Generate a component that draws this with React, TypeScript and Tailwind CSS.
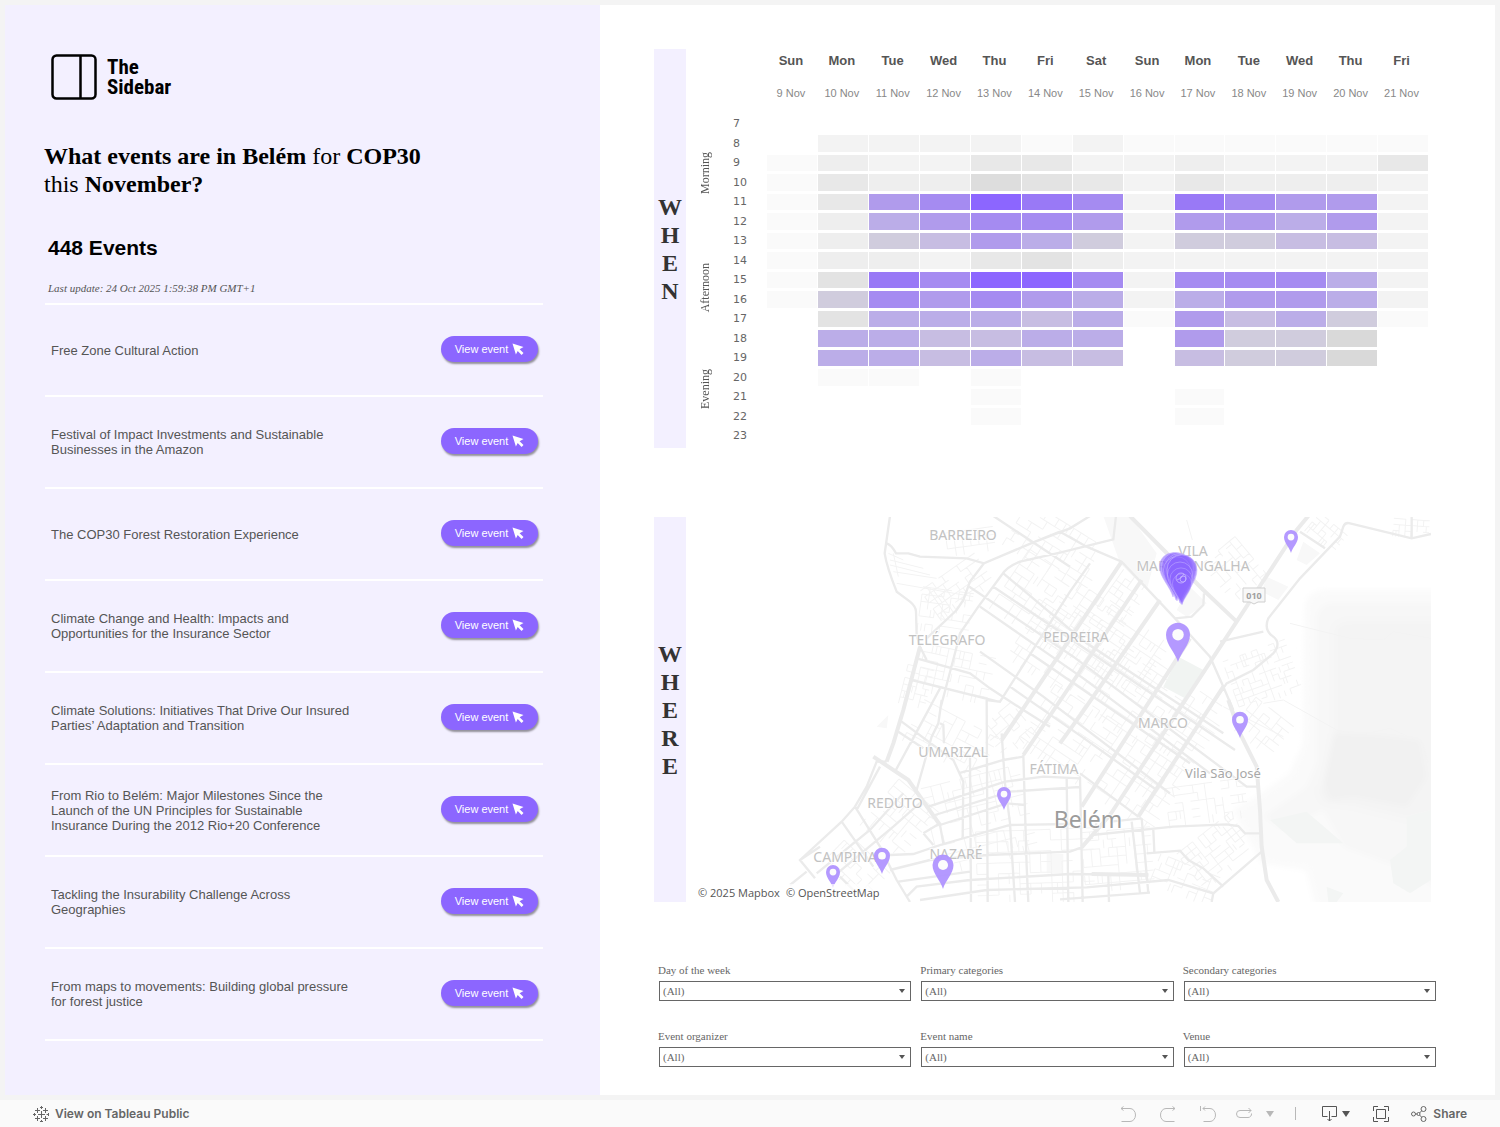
import type { ReactNode } from 'react';
import clsx from 'clsx';

const SANS = "font-['Liberation_Sans',sans-serif]";
const SERIF = "font-['Liberation_Serif',serif]";

const events = [
  'Free Zone Cultural Action',
  'Festival of Impact Investments and Sustainable Businesses in the Amazon',
  'The COP30 Forest Restoration Experience',
  'Climate Change and Health: Impacts and Opportunities for the Insurance Sector',
  'Climate Solutions: Initiatives That Drive Our Insured Parties’ Adaptation and Transition',
  'From Rio to Belém: Major Milestones Since the Launch of the UN Principles for Sustainable Insurance During the 2012 Rio+20 Conference',
  'Tackling the Insurability Challenge Across Geographies',
  'From maps to movements: Building global pressure for forest justice',
];

const days = [
  ['Sun', '9 Nov'],
  ['Mon', '10 Nov'],
  ['Tue', '11 Nov'],
  ['Wed', '12 Nov'],
  ['Thu', '13 Nov'],
  ['Fri', '14 Nov'],
  ['Sat', '15 Nov'],
  ['Sun', '16 Nov'],
  ['Mon', '17 Nov'],
  ['Tue', '18 Nov'],
  ['Wed', '19 Nov'],
  ['Thu', '20 Nov'],
  ['Fri', '21 Nov'],
];

// one character per day, "." is no events, "e" is the busiest
const hours: { hour: number; levels: string }[] = [
  { hour: 7, levels: '.............' },
  { hour: 8, levels: '.222212111111' },
  { hour: 9, levels: '1322442232224' },
  { hour: 10, levels: '1433654243332' },
  { hour: 11, levels: '14bcedc2dcbb2' },
  { hour: 12, levels: '13abccb2bbab2' },
  { hour: 13, levels: '1389ba8288992' },
  { hour: 14, levels: '1332453222222' },
  { hour: 15, levels: '15dceec2ccca2' },
  { hour: 16, levels: '18cbcba2abba2' },
  { hour: 17, levels: '.5aaa9a1b9a81' },
  { hour: 18, levels: '.aa99aa.b887.' },
  { hour: 19, levels: '.aa9a99.9887.' },
  { hour: 20, levels: '.11.1........' },
  { hour: 21, levels: '....1...1....' },
  { hour: 22, levels: '....1...1....' },
  { hour: 23, levels: '.............' },
];

const levelColors: Record<string, string> = {
  '.': 'bg-white',
  '1': 'bg-[#fafafa]',
  '2': 'bg-[#f3f3f3]',
  '3': 'bg-[#eeeeee]',
  '4': 'bg-[#e8e8e8]',
  '5': 'bg-[#e3e3e3]',
  '6': 'bg-[#dddddd]',
  '7': 'bg-[#d9d9d9]',
  '8': 'bg-[#d0ccdd]',
  '9': 'bg-[#c7bde2]',
  a: 'bg-[#bbade8]',
  b: 'bg-[#b09bec]',
  c: 'bg-[#a58bf1]',
  d: 'bg-[#9979f6]',
  e: 'bg-[#8c66ff]',
};

const periods: Record<number, { name: string; span: number; pad: string }> = {
  7: { name: 'Morning', span: 6, pad: 'pt-2' },
  13: { name: 'Afternoon', span: 6, pad: 'pt-1' },
  19: { name: 'Evening', span: 5, pad: 'pb-2' },
};

const filters = [
  'Day of the week',
  'Primary categories',
  'Secondary categories',
  'Event organizer',
  'Event name',
  'Venue',
];

function Strip({ text }: { text: string }) {
  return (
    <h2
      aria-label={text}
      className={clsx(
        SERIF,
        'flex w-8 shrink-0 flex-col items-center justify-center bg-[#f3f0ff] text-2xl leading-7 font-bold text-[#333333]'
      )}
    >
      {text.split('').map((letter, i) => (
        <span key={i}>{letter}</span>
      ))}
    </h2>
  );
}

function Logo() {
  return (
    <div className="ml-[6px] flex items-center gap-[10px]">
      <svg
        width="46"
        height="46"
        viewBox="0 0 46 46"
        fill="none"
        stroke="#000"
        strokeWidth="2.5"
        aria-hidden="true"
      >
        <rect x="1.5" y="1.5" width="43" height="43" rx="4" />
        <path d="M29.5 2v42" />
      </svg>
      <p className="font-['Roboto_Condensed',Roboto,sans-serif] text-[21px] leading-5 font-bold text-black">
        The
        <br />
        Sidebar
      </p>
    </div>
  );
}

function EventRow({ name }: { name: string }) {
  return (
    <li className="flex h-[92px] items-center justify-between border-b-2 border-white pr-[5px] pl-[6px]">
      <p className="w-[310px] text-[13px] leading-[15px] text-[#555555]">
        {name}
      </p>
      <button
        type="button"
        className="mb-[3px] flex h-[26px] w-[97px] items-center justify-center gap-1 rounded-full bg-[#8c66ff] pt-px text-[11px] text-white shadow-[1px_2px_2px_rgba(0,0,0,0.4)]"
      >
        View event
        <svg width="12" height="12" viewBox="0 0 12 12" aria-hidden="true">
          <path
            d="M.5.5l11 3.6-3.9 2.2 3.900 3.700-1.900 1.900-3.900-3.800L3.900 11.500z"
            fill="#fff"
          />
        </svg>
      </button>
    </li>
  );
}

function Heatmap() {
  return (
    <div className={clsx(SANS, 'min-w-0 flex-1')}>
      <table className="h-[398px] w-full table-fixed border-collapse">
        <colgroup>
          <col className="w-[38px]" />
          <col className="w-[43px]" />
          {days.map(([, date]) => (
            <col key={date} />
          ))}
        </colgroup>
        <thead>
          <tr className="h-[23px] text-[13px] leading-4 font-bold text-[#555555]">
            <td colSpan={2} />
            {days.map(([day, date]) => (
              <th key={date} scope="col" className="p-0 pr-[3px]">
                {day}
              </th>
            ))}
          </tr>
          <tr className="h-[42px] text-[11px] leading-4 text-[#888888]">
            <td colSpan={2} />
            {days.map(([, date]) => (
              <td
                key={date}
                className="p-0 pt-px pr-[3px] text-center whitespace-nowrap"
              >
                {date}
              </td>
            ))}
          </tr>
        </thead>
        <tbody>
          {hours.map(({ hour, levels }) => (
            <tr key={hour}>
              {periods[hour] && (
                <th
                  scope="rowgroup"
                  rowSpan={periods[hour].span}
                  className={clsx('p-0 font-normal', periods[hour].pad)}
                >
                  <span
                    className={clsx(
                      SERIF,
                      'inline-block rotate-180 text-xs leading-4 text-[#555555] [writing-mode:vertical-rl]'
                    )}
                  >
                    {periods[hour].name}
                  </span>
                </th>
              )}
              <th
                scope="row"
                className="p-0 pt-px pl-[9px] text-left font-['DejaVu_Sans',sans-serif] text-[11px] leading-4 font-normal text-[#666666]"
              >
                {hour}
              </th>
              {levels.split('').map((level, i) => (
                <td
                  key={i}
                  className={clsx(
                    'border-y-[3px] border-r border-white p-0',
                    levelColors[level]
                  )}
                />
              ))}
            </tr>
          ))}
        </tbody>
      </table>
    </div>
  );
}

const avenues = [
  'M1855 18L1820 60 1640 335 1260 915 1175 1012',
  'M1600 530L1345 920',
  'M1500 385L1175 890',
  'M1410 270L1175 610 1110 700',
  'M1355 210L1000 735',
  'M1295 155L1000 595 935 690',
  'M1320 18L1540 240 1640 335',
  'M690 410L640 600 610 700 590 755',
  'M550 740L655 810 750 945',
  'M1615 570L1650 670 1700 770 1710 900 1715 1010 1730 1110 1765 1176',
  'M1205 1092L1375 1095',
];

const roads = [
  'M600 18L584 130Q590 170 620 245L660 275Q678 290 678 305L680 375 690 410 710 450',
  'M590 100Q605 105 618 130L655 130 690 140 830 145 882 160 1030 97 1140 55 1200 18',
  'M882 160L840 215 820 270 800 300 710 385',
  'M1278 18L1270 88 1110 128 990 155Q950 170 935 195L865 290 810 370 800 410 750 600',
  'M910 18L1140 170',
  'M1110 65L1190 110 1295 155 1455 325 1560 440 1600 530 1630 600',
  'M1110 65L1030 97',
  'M1455 325L1505 320 1540 285 1542 250',
  'M1200 160L1140 245 930 575 890 570',
  'M940 190L1190 400 1600 670',
  'M910 230L1635 720',
  'M838 230L1150 440 1670 830 1705 830',
  'M870 290L1180 505 1560 790',
  'M870 425L1060 560 1440 850',
  'M1020 430L1500 760',
  'M960 530L1175 680 1400 840',
  'M1170 790L1345 920',
  'M680 445L840 490 900 535 1000 600 1080 650',
  'M665 510L925 575',
  'M750 535L715 600 615 785',
  'M755 570L745 640 725 680 680 840',
  'M750 640L760 645 762 700',
  'M890 570L893 1176',
  'M840 740L843 1176',
  'M635 635L790 750 820 815 818 985',
  'M625 665L700 715',
  'M750 945L760 1000',
  'M1000 735L1010 1070 1015 1176',
  'M935 670L945 820 960 940 975 1176',
  'M805 790L940 750 1000 740',
  'M715 890L945 815 1060 800 1170 805',
  'M735 915L960 845 1140 833 1170 831',
  'M750 945L950 880 1005 885',
  'M700 970L750 940M700 970L730 1005',
  'M600 1035L670 1032 750 1005 960 945 1140 942',
  'M600 1080L720 1050 890 1035 1140 1025 1175 1012',
  'M625 1115L840 1085',
  'M650 1160L680 1130 840 1110 1140 1092 1375 1095',
  'M690 1170L890 1140 1190 1132 1435 1110 1570 1150 1715 1025',
  'M1110 1168L1380 1148',
  'M590 755L560 755 530 830 495 890 455 935 330 1050 375 1105',
  'M570 770L500 900',
  'M495 890L570 1010 620 1110 660 1176',
  'M455 935L550 1070',
  'M380 1090L540 960 640 850',
  'M430 1100L610 950 700 870',
  'M330 1050L390 1010',
  'M300 1125L350 1085',
  'M450 1100L500 1150',
  'M1130 805L1135 1176',
  'M1170 800L1178 1176',
  'M1205 975L1450 950 1610 943 1645 948 1665 970 1715 970',
  'M1325 935L1350 1150',
  'M1355 925L1375 1150',
  'M1390 960L1393 1025',
  'M1370 1030L1470 1022 1495 1050 1540 1075 1600 1130',
  'M1260 935L1355 925',
  'M1210 960L1220 940',
  'M1255 1095L1257 1176',
  'M1590 395L1720 365',
  'M1830 65L1905 115',
  'M2223 72L2165 85 1980 40Q1965 36 1960 50L1950 80 1830 205 1735 325Q1720 360 1750 380 1775 400 1750 430L1690 480 1610 520 1555 600',
  'M2165 18L2165 85',
  'M1570 1150L1565 1176',
];

// blocks of side streets: origin, size, rotation and spacing
const districts = [
  { x: 960, y: 30, w: 260, h: 150, angle: 32, step: 26 },
  { x: 770, y: 60, w: 130, h: 70, angle: -8, step: 24 },
  { x: 700, y: 180, w: 190, h: 90, angle: -35, step: 22 },
  { x: 690, y: 240, w: 150, h: 120, angle: 8, step: 22 },
  { x: 690, y: 420, w: 200, h: 140, angle: 12, step: 24 },
  { x: 640, y: 470, w: 70, h: 110, angle: 14, step: 20 },
  { x: 920, y: 240, w: 500, h: 200, angle: 34, step: 27 },
  { x: 960, y: 400, w: 640, h: 240, angle: 34, step: 27 },
  { x: 1000, y: 640, w: 480, h: 200, angle: 34, step: 27 },
  { x: 1230, y: 220, w: 130, h: 90, angle: -55, step: 20 },
  { x: 660, y: 620, w: 250, h: 120, angle: 28, step: 28 },
  { x: 560, y: 830, w: 130, h: 160, angle: 40, step: 26 },
  { x: 420, y: 1010, w: 150, h: 110, angle: 44, step: 24 },
  { x: 720, y: 800, w: 270, h: 260, angle: -14, step: 30 },
  { x: 900, y: 600, w: 110, h: 110, angle: 50, step: 24 },
  { x: 860, y: 960, w: 320, h: 200, angle: -2, step: 32 },
  { x: 1180, y: 960, w: 190, h: 180, angle: -5, step: 26 },
  { x: 1390, y: 1060, w: 170, h: 90, angle: 22, step: 24 },
  { x: 1480, y: 960, w: 190, h: 130, angle: -38, step: 20 },
  { x: 1430, y: 820, w: 230, h: 110, angle: -8, step: 24 },
  { x: 1620, y: 420, w: 180, h: 160, angle: -20, step: 18 },
  { x: 1560, y: 110, w: 140, h: 130, angle: 50, step: 22 },
  { x: 1650, y: 590, w: 130, h: 110, angle: 38, step: 24 },
  { x: 1860, y: 30, w: 90, h: 60, angle: 40, step: 18 },
  { x: 2110, y: 28, w: 90, h: 45, angle: 4, step: 18 },
];

function noise(n: number) {
  const v = Math.sin(n * 12.9898) * 43758.5453;
  return v - Math.floor(v);
}

function sideStreets(w: number, h: number, step: number) {
  let d = '';
  for (let x = 0; x <= w; x += step) {
    for (let y = 0; y <= h; y += step) {
      const n = x * 7 + y * 13 + w;
      if (noise(n) > 0.35) d += `M${x} ${y}h${step}`;
      if (noise(n + 1) > 0.5) d += `M${x} ${y}v${step}`;
      if (noise(n + 2) > 0.9) d += `M${x + step / 2} ${y}v${step}`;
    }
  }
  return d;
}

const places = [
  { lines: ['BARREIRO'], x: 266, y: 23 },
  { lines: ['VILA', 'MARACANGALHA'], x: 496, y: 39 },
  { lines: ['TELÉGRAFO'], x: 250, y: 128 },
  { lines: ['PEDREIRA'], x: 379, y: 125 },
  { lines: ['MARCO'], x: 466, y: 211 },
  { lines: ['UMARIZAL'], x: 256, y: 240 },
  { lines: ['FÁTIMA'], x: 357, y: 257 },
  { lines: ['REDUTO'], x: 198, y: 291 },
  { lines: ['CAMPINA'], x: 148, y: 345 },
  { lines: ['NAZARÉ'], x: 259, y: 342 },
];

const pins = [
  { x: 594, y: 36, size: 14 },
  { x: 481, y: 145, size: 24 },
  { x: 543, y: 221, size: 16 },
  { x: 307, y: 293, size: 14 },
  { x: 185, y: 357, size: 16 },
  { x: 136, y: 371, size: 14 },
  { x: 246, y: 372, size: 21 },
];

const cluster = [
  { x: 476, y: 80, size: 27 },
  { x: 479, y: 83, size: 29 },
  { x: 482, y: 81, size: 27 },
  { x: 484, y: 85, size: 29 },
  { x: 480, y: 84, size: 27 },
  { x: 485, y: 87, size: 30 },
  { x: 483, y: 86, size: 25 },
  { x: 484, y: 87, size: 22 },
  { x: 485, y: 88, size: 19 },
];

// the tip of the pin is at 0,0 and the head is one unit wide
function Pin({
  x,
  y,
  size,
  solid,
}: {
  x: number;
  y: number;
  size: number;
  solid?: boolean;
}) {
  return (
    <g transform={`translate(${x} ${y}) scale(${size})`}>
      <path
        d="M0 0C-.1-.38-.5-.72-.5-1.14a.5.5 0 0 1 1 0C.5-.72.1-.38 0 0z"
        fill={solid ? '#8c66ff' : '#b094ff'}
        fillOpacity={solid ? 0.6 : 0.95}
        stroke={solid ? '#c9b8ff' : 'none'}
        strokeWidth={solid ? 0.02 : 0}
      />
      {!solid && <circle cx="0" cy="-1.140" r=".24" fill="#fcfcfc" />}
    </g>
  );
}

function CityMap() {
  return (
    <div className="relative min-w-0 flex-1">
      <svg
        className="block h-[385px] w-full"
        viewBox="0 0 734 385"
        preserveAspectRatio="xMidYMid slice"
        role="img"
        aria-label="Map of event venues in Belém"
      >
        <defs>
          <filter id="soft" x="-20%" y="-20%" width="140%" height="140%">
            <feGaussianBlur stdDeviation="9" />
          </filter>
        </defs>
        <g transform="translate(-7 -7) scale(.33333)" fill="none">
          <g filter="url(#soft)">
            <path
              d="M1845 290Q1850 245 1900 240H2280V1200H1880L1850 1080 1715 1060 1630 900 1700 860 1800 790 1840 700z"
              fill="#fafafa"
            />
            <path
              d="M1880 320Q1890 280 1930 280H2280V1160L2150 1080 1960 1010 1900 900 1780 960 1720 920 1850 830 1880 760z"
              fill="#f7f7f7"
            />
            <path
              d="M1930 360Q1940 330 1980 330H2280V900L2150 930 1990 890 1900 880 1880 840 1930 800z"
              fill="#f4f4f4"
            />
            <path
              d="M1930 670L2060 675 2190 690 2210 800 2150 890 1990 860 1920 870 1900 820z"
              fill="#f1f1f1"
            />
          </g>
          <path
            d="M1740 930L1850 905 1960 1000 1900 1000 1820 1000zM2150 920L2223 900V1110L2160 1150 2110 1120 2100 1050 2150 1010zM1910 1130L1960 1150 1940 1176H1915z"
            fill="#f3f5f4"
          />
          <path
            d="M1240 18H1320L1400 130 1370 240 1290 160zM1500 230L1550 280 1490 320 1460 300zM1730 200L1795 230 1765 270 1715 245zM560 650L595 615 590 655zM1070 1032H1120V1090H1070zM1840 95L1890 130 1850 165 1820 150z"
            fill="#f8f8f8"
          />
          <g stroke="#f3f3f3" strokeWidth="3">
            {districts.map((d) => (
              <path
                key={`${d.x}-${d.y}`}
                transform={`rotate(${d.angle} ${d.x + d.w / 2} ${d.y + d.h / 2}) translate(${d.x} ${d.y})`}
                d={sideStreets(d.w, d.h, d.step)}
              />
            ))}
            <path d="M1800 340L1980 385 2080 390 2110 365 2223 385M1720 580L1780 570 1940 660 2010 675 2100 655 2200 700 2215 760M610 130L625 200M595 130L640 150M600 150L700 175M600 165L720 195M610 185L740 205M620 220L850 260M1600 590L1780 680M1490 30L1507 90" />
          </g>
          <path d="M1465 440L1540 480 1485 565 1420 530z" fill="#f1f4f2" />
          <path d={roads.join('')} stroke="#ebebeb" strokeWidth="7" />
          <path
            d={avenues.join('')}
            stroke="#ebebeb"
            strokeWidth="12"
            strokeLinejoin="round"
          />
        </g>

        <g
          className="font-['Noto_Sans',sans-serif]"
          textAnchor="middle"
          stroke="#fff"
          strokeOpacity=".7"
          strokeWidth="2"
          paintOrder="stroke"
        >
          {places.map((place) => (
            <text
              key={place.lines[0]}
              x={place.x}
              y={place.y}
              fontSize="14"
              fill="#c2c2c2"
            >
              {place.lines.map((line, i) => (
                <tspan key={line} x={place.x} dy={i * 15}>
                  {line}
                </tspan>
              ))}
            </text>
          ))}
          <text x="526" y="261" fontSize="13" fill="#a8a8a8">
            Vila São José
          </text>
          <text x="391" y="311" fontSize="23" fill="#9c9c9c">
            Belém
          </text>
        </g>

        <path
          d="M546 71h22v14h-7l-4 2-4-2h-7z"
          fill="#f8f8f8"
          stroke="#cfcfcf"
        />
        <text
          x="557"
          y="82"
          textAnchor="middle"
          fontSize="9"
          fontWeight="700"
          fill="#a0a0a0"
          className="font-['Noto_Sans',sans-serif]"
        >
          010
        </text>

        {cluster.map((pin, i) => (
          <Pin key={i} {...pin} solid />
        ))}
        <g fill="none" stroke="#c9b8ff" strokeWidth=".8">
          <circle cx="484" cy="61" r="5" />
          <circle cx="486" cy="62" r="3" />
          <path d="M480 63l4-2 3-4" />
        </g>
        {pins.map((pin) => (
          <Pin key={`${pin.x}-${pin.y}`} {...pin} />
        ))}
      </svg>
      <p className="absolute bottom-0 left-0 flex gap-[6px] bg-white/70 px-px font-['Open_Sans',sans-serif] text-[11px] leading-[18px] text-[#555555]">
        <a href="#mapbox">© 2025 Mapbox</a>
        <a href="#osm">© OpenStreetMap</a>
      </p>
    </div>
  );
}

function Filter({ label }: { label: string }) {
  const id = label.toLowerCase().replace(/ /g, '-');
  return (
    <div className={clsx(SERIF, 'text-[11px] text-[#666666]')}>
      <label htmlFor={id} className="block leading-4">
        {label}
      </label>
      <div className="relative mt-[3px] ml-px">
        <select
          id={id}
          className="block h-5 w-full appearance-none border border-[#666666] bg-white pl-[3px] leading-4"
        >
          <option>(All)</option>
        </select>
        <svg
          className="pointer-events-none absolute top-2 right-[6px]"
          width="6"
          height="4"
          viewBox="0 0 6 4"
          aria-hidden="true"
        >
          <path d="M0 0h6L3 4z" fill="#555" />
        </svg>
      </div>
    </div>
  );
}

function Icon({ children }: { children: ReactNode }) {
  return (
    <svg
      width="16"
      height="16"
      viewBox="0 0 16 16"
      fill="none"
      stroke="currentColor"
      aria-hidden="true"
    >
      {children}
    </svg>
  );
}

function Caret() {
  return (
    <svg width="8" height="6" viewBox="0 0 8 6" aria-hidden="true">
      <path d="M0 0h8L4 6z" fill="currentColor" />
    </svg>
  );
}

function Toolbar() {
  return (
    <footer className="flex h-[27px] items-center justify-between bg-[#fafafa] px-[33px] font-['Inter',sans-serif] text-xs font-semibold text-[#666666]">
      <a href="#tableau" className="flex items-center gap-[6px]">
        <Icon>
          <path d="M8.500 5v7M5 8.500h7M8.500 0v3M7 1.500h3M8.500 14v3M7 15.500h3M0 8.500h3M1.500 7v3M13.500 8.500h3M15.500 7v3M4.500 2v5M2 4.500h5M12.500 2v5M10 4.500h5M4.500 10v5M2 12.500h5M12.500 10v5M10 12.500h5" />
        </Icon>
        View on Tableau Public
      </a>
      <div className="flex items-center">
        <div className="flex items-center gap-6 text-[#b8b8b8]">
          <button type="button" aria-label="Undo" disabled>
            <Icon>
              <path d="M1 2.500h9a5.500 6.500 0 0 1 0 13H1.500M3.500.5l-2.500 2 2.500 2" />
            </Icon>
          </button>
          <button type="button" aria-label="Redo" disabled>
            <Icon>
              <path d="M15 2.500H6a5.500 6.500 0 0 0 0 13h8.500M12.500.5l2.500 2-2.500 2" />
            </Icon>
          </button>
          <button type="button" aria-label="Revert" disabled>
            <Icon>
              <path d="M3 2.500h7a5.500 6.500 0 0 1 0 13H3.500M5 .5l-2 2 2 2M.5 0v5" />
            </Icon>
          </button>
        </div>
        <button
          type="button"
          aria-label="Refresh"
          disabled
          className="ml-5 text-[#b8b8b8]"
        >
          <Icon>
            <path d="M15 4.500H4a3.500 3.500 0 0 0 0 7h8a3.500 3.500 0 0 0 3.500-4M12.500 2L15 4.500 12.500 7" />
          </Icon>
        </button>
        <button
          type="button"
          aria-label="Refresh options"
          disabled
          className="ml-[14px] text-[#b8b8b8]"
        >
          <Caret />
        </button>
        <span className="ml-[21px] h-[13px] w-px bg-[#b8b8b8]" />
        <button
          type="button"
          aria-label="Download"
          className="ml-[26px] flex items-center gap-1 text-[#555555]"
        >
          <Icon>
            <path d="M5.500 10.500H.500V.500h14v10h-5M7.500 5v10M5.500 13l2 2 2-2" />
          </Icon>
          <Caret />
        </button>
        <button
          type="button"
          aria-label="Full screen"
          className="ml-[23px] text-[#555555]"
        >
          <Icon>
            <path d="M.5 5V.5H5M11 .5h4.500V5M15.500 11v4.500H11M5 15.500H.5V11M3.500 3.500h9v9h-9z" />
          </Icon>
        </button>
        <button type="button" className="ml-[22px] flex items-center gap-[6px]">
          <Icon>
            <circle cx="2.500" cy="8" r="2" />
            <circle cx="12.500" cy="3" r="2.500" />
            <circle cx="12.500" cy="13" r="2.500" />
            <circle cx="7.500" cy="8" r="1.500" />
            <path d="M4.500 8h1.500M8.500 7l2-2M8.500 9l2 2" />
          </Icon>
          Share
        </button>
      </div>
    </footer>
  );
}

export default function App() {
  return (
    <div className={clsx(SANS, 'bg-[#f4f4f4]')}>
      <main className="grid grid-cols-[595fr_895fr] p-[5px]">
        <section className="bg-[#f3f0ff] pt-[49px] pr-[57px] pb-[54px] pl-10">
          <Logo />
          <h1
            className={clsx(
              SERIF,
              'mt-[42px] -ml-px max-w-[420px] text-2xl leading-7 font-bold text-black'
            )}
          >
            What events are in Belém{' '}
            <span className="font-normal">for</span> COP30
            <br />
            <span className="font-normal">this</span> November?
          </h1>
          <p className="mt-9 ml-[3px] text-[21px] leading-7 font-bold text-black">
            448 Events
          </p>
          <p
            className={clsx(
              SERIF,
              'mt-[18px] ml-[3px] text-[11px] leading-4 text-[#555555] italic'
            )}
          >
            Last update: 24 Oct 2025 1:59:38 PM GMT+1
          </p>
          <ul className="mt-[7px] border-t-2 border-white">
            {events.map((name) => (
              <EventRow key={name} name={name} />
            ))}
          </ul>
        </section>

        <section className="bg-white pt-11 pr-[59px] pl-[54px]">
          <div className="mr-[7px] flex h-[399px]">
            <Strip text="WHEN" />
            <Heatmap />
          </div>
          <div className="mt-[69px] mr-[5px] flex gap-[11px]">
            <Strip text="WHERE" />
            <CityMap />
          </div>
          <form className="mt-[60px] ml-1 grid grid-cols-3 gap-x-[9px] gap-y-[27px]">
            {filters.map((label) => (
              <Filter key={label} label={label} />
            ))}
          </form>
        </section>
      </main>
      <Toolbar />
    </div>
  );
}
